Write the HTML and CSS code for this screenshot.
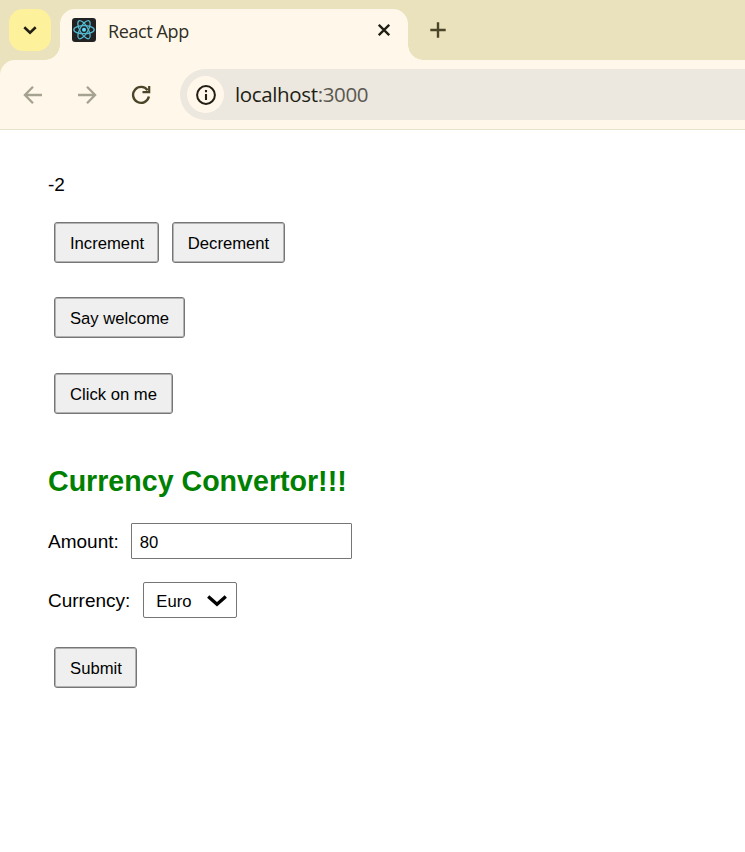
FILE: index.html
```html
<!DOCTYPE html>
<html lang="en">
<head>
<meta charset="utf-8">
<title>React App</title>
<link rel="stylesheet" href="styles.css">
</head>
<body>
<header class="browser">
  <div class="tabstrip">
    <div class="tab-search"><svg width="14" height="9" viewBox="0 0 14 9"><path d="M1.3 1.3 7 6.7 12.7 1.3" fill="none" stroke="#211e14" stroke-width="2.6"/></svg></div>
    <div class="tab">
      <svg class="favicon" width="24" height="24" viewBox="0 0 24 24">
        <rect width="24" height="24" rx="3" fill="#222"/>
        <g fill="none" stroke="#53b9d1" stroke-width="1.3">
          <ellipse cx="12" cy="11.7" rx="10.2" ry="4"/>
          <ellipse cx="12" cy="11.7" rx="10.2" ry="4" transform="rotate(60 12 11.7)"/>
          <ellipse cx="12" cy="11.7" rx="10.2" ry="4" transform="rotate(120 12 11.7)"/>
        </g>
        <circle cx="12" cy="11.7" r="2" fill="#61dafb"/>
      </svg>
      <span class="tab-title">React App</span>
      <svg class="close" width="12" height="12" viewBox="0 0 12 12"><path d="M.8.8 11.2 11.2M11.2.8.8 11.2" stroke="#211e14" stroke-width="2.3"/></svg>
    </div>
    <svg class="new-tab" width="16" height="16" viewBox="0 0 16 16"><path d="M8 .3V15.7M.3 8H15.7" stroke="#4b4529" stroke-width="2.4"/></svg>
  </div>
  <div class="toolbar">
    <svg class="back" width="20" height="20" viewBox="0 0 20 20"><path d="M19 10H2M10 1.7 1.9 10 10 18.3" fill="none" stroke="#a6a292" stroke-width="2.3"/></svg>
    <svg class="forward" width="20" height="20" viewBox="0 0 20 20"><path d="M1 10H18M10 1.7 18.1 10 10 18.3" fill="none" stroke="#a6a292" stroke-width="2.3"/></svg>
    <svg class="reload" width="20" height="20" viewBox="0 0 20 20"><path d="M16.6 5.2A8 8 0 1 0 17.9 11.6" fill="none" stroke="#4b4529" stroke-width="2.4"/><path d="M18.2 1V7.2H11.5" fill="none" stroke="#4b4529" stroke-width="2.2"/></svg>
    <div class="address">
      <span class="info"><svg width="20" height="20" viewBox="0 0 20 20"><circle cx="10" cy="10" r="8.9" fill="none" stroke="#211e14" stroke-width="2"/><path d="M10 9V15M10 5V7.2" stroke="#211e14" stroke-width="2.1"/></svg></span>
      <span class="url">localhost<span class="port">:3000</span></span>
    </div>
  </div>
</header>
<main>
  <div class="count">-2</div>
  <div class="row counter"><button class="increment">Increment</button><button class="decrement">Decrement</button></div>
  <div class="row welcome"><button>Say welcome</button></div>
  <div class="row click"><button>Click on me</button></div>
  <h2>Currency Convertor!!!</h2>
  <form>
    <div class="field"><label for="amount">Amount:</label><input id="amount" type="text" value="80"></div>
    <div class="field currency"><label>Currency:</label>
      <div class="select" role="combobox"><span>Euro</span><svg width="20" height="12" viewBox="0 0 20 12"><path d="M1.2 1.4 10 9.3 18.8 1.4" fill="none" stroke="#000" stroke-width="3.3"/></svg></div>
    </div>
    <div class="row submit"><button type="button">Submit</button></div>
  </form>
</main>
</body>
</html>
```
FILE: styles.css
```css
* { box-sizing: border-box; }
body { margin: 0; background: #fff; color: #000; font-family: "Liberation Sans", Arial, sans-serif; font-size: 19px; overflow: hidden; }
svg { display: block; flex: none; }
.browser { height: 130px; background: #eae2bd; }
.tabstrip { height: 60px; display: flex; align-items: flex-start; }
.tab-search { width: 42px; height: 42px; margin: 9px 0 0 9px; border-radius: 14px; background: #fef19b; display: flex; align-items: center; justify-content: center; }
.tab { position: relative; width: 348px; height: 51px; margin: 9px 0 0 9px; padding: 0 18px 9px 12px; display: flex; align-items: center; background: #fff8ea; border-radius: 15px 15px 0 0; }
.tab::before, .tab::after { content: ""; position: absolute; bottom: 0; width: 15px; height: 15px; }
.tab::before { left: -15px; background: radial-gradient(circle at 0 0, transparent 14.5px, #fff8ea 15px); }
.tab::after { right: -15px; background: radial-gradient(circle at 100% 0, transparent 14.5px, #fff8ea 15px); }
.tab-title { margin: 2px 0 0 12px; font: 18px/24px "Open Sans", sans-serif; letter-spacing: -.4px; color: #302e25; }
.close { margin-left: auto; }
.new-tab { margin: 22px 0 0 22px; }
.toolbar { height: 70px; padding-left: 23px; display: flex; align-items: center; background: #fff8ea; border-bottom: 1px solid #e9e2cd; border-radius: 15px 0 0 0; }
.forward { margin-left: 34px; }
.reload { margin-left: 34px; }
.address { height: 51px; flex: 1; margin-left: 29px; padding-left: 7px; display: flex; align-items: center; background: #ece7df; border-radius: 26px 0 0 26px; }
.info { width: 37px; height: 37px; display: flex; align-items: center; justify-content: center; border-radius: 50%; background: #fff8ea; }
.url { margin: 0 0 2px 11px; font: 20.5px/28px "Open Sans", sans-serif; letter-spacing: -.36px; color: #211e14; }
.port { color: #5b584f; }
main { padding: 44px 48px 0; }
.count { height: 22px; line-height: 22px; }
.row { display: flex; gap: 13px; padding-left: 6px; }
button { height: 41px; padding: 2px 15px 0; border: 1px solid #767676; border-radius: 3px; background: #efefef; box-shadow: inset 0 0 0 1px #b3b3b3; color: #000; font: 16.67px/20px "Liberation Sans", Arial, sans-serif; white-space: nowrap; }
.increment { width: 105px; padding-inline: 1px 0; }
.decrement { width: 113px; padding-inline: 0; }
.counter { margin-top: 26px; }
.welcome { margin-top: 34px; }
.click { margin-top: 35px; }
h2 { margin: 50px 0 0; font-size: 28.6px; line-height: 34px; color: #008000; white-space: nowrap; }
.field { display: flex; align-items: center; height: 36px; margin-top: 25px; }
.currency { margin-top: 23px; }
label { margin-top: 1px; }
input { width: 221px; height: 36px; margin: 0 0 0 12px; padding: 4px 7px 0 8px; border: 1px solid #767676; border-radius: 1px; color: #000; font: 16.67px "Liberation Sans", Arial, sans-serif; }
.select { width: 94px; height: 36px; margin-left: 13px; padding: 2px 9px 0 12px; border: 1px solid #767676; border-radius: 2px; display: flex; align-items: center; justify-content: space-between; font-size: 16.67px; }
.select span { padding-top: 2px; }
.submit { margin-top: 29px; }
.submit button { width: 83px; padding-inline: 1px 0; }
```
